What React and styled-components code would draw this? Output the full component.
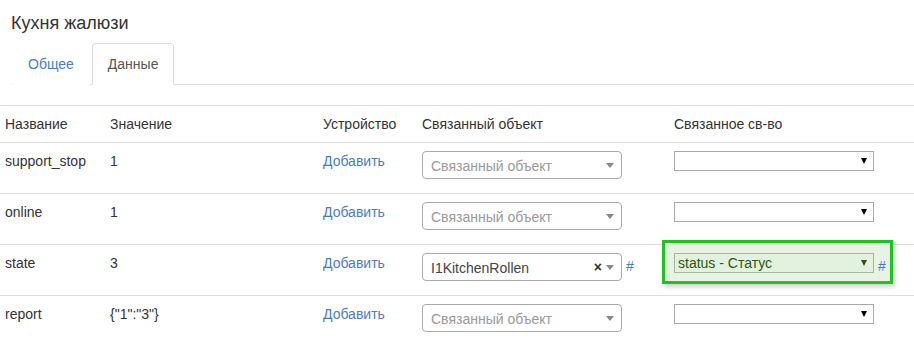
import styled, { createGlobalStyle } from "styled-components";

const GlobalStyle = createGlobalStyle`
  html, body {
    margin: 0;
    padding: 0;
    background: #fff;
  }
  body {
    font-family: "Liberation Sans", Arial, sans-serif;
    font-size: 14px;
    line-height: 20px;
    color: #333;
  }
`;

const rows = [
    { name: "support_stop", value: "1", object: null, prop: null },
    { name: "online", value: "1", object: null, prop: null },
    { name: "state", value: "3", object: "I1KitchenRollen", prop: "status - Статус" },
    { name: "report", value: '{"1":"3"}', object: null, prop: null },
];

const Select2 = ({ value }) => (
    <S.Select2Box>
        <S.Select2Text $placeholder={!value}>{value || "Связанный объект"}</S.Select2Text>
        {value && <S.Clear>×</S.Clear>}
        <S.Select2Arrow />
    </S.Select2Box>
);

const NativeSelect = ({ value, $active }) => (
    <S.NativeBox $active={$active}>
        <S.NativeText $active={$active}>{value}</S.NativeText>
        <S.NativeArrow $active={$active} />
    </S.NativeBox>
);

const App = () => {
    return (
        <>
            <GlobalStyle />
            <S.Page>
                <S.Head>
                    <S.Title>Кухня жалюзи</S.Title>
                    <S.Tabs>
                        <S.Tab>Общее</S.Tab>
                        <S.Tab $active>Данные</S.Tab>
                    </S.Tabs>
                </S.Head>

                <S.Table>
                    <colgroup>
                        <col style={{ width: 105 }} />
                        <col style={{ width: 213 }} />
                        <col style={{ width: 99 }} />
                        <col style={{ width: 252 }} />
                        <col style={{ width: 245 }} />
                    </colgroup>
                    <thead>
                        <tr>
                            <S.Th>Название</S.Th>
                            <S.Th>Значение</S.Th>
                            <S.Th>Устройство</S.Th>
                            <S.Th>Связанный объект</S.Th>
                            <S.Th>Связанное св-во</S.Th>
                        </tr>
                    </thead>
                    <tbody>
                        {rows.map((r) => (
                            <tr key={r.name}>
                                <S.Td>{r.name}</S.Td>
                                <S.Td>{r.value}</S.Td>
                                <S.Td><S.Link>Добавить</S.Link></S.Td>
                                <S.Td>
                                    <S.Inline>
                                        <Select2 value={r.object} />
                                        {r.object && <S.Hash>#</S.Hash>}
                                    </S.Inline>
                                </S.Td>
                                <S.Td $highlight={!!r.prop}>
                                    <S.Inline>
                                        <NativeSelect value={r.prop} $active={!!r.prop} />
                                        {r.prop && <S.Hash>#</S.Hash>}
                                    </S.Inline>
                                </S.Td>
                            </tr>
                        ))}
                    </tbody>
                </S.Table>
            </S.Page>
        </>
    );
};

export default App;

const S = {
    Page: styled.div`
        width: 914px;
    `,

    Head: styled.div`
        padding: 13px 0 0 11px;
    `,

    Title: styled.h4`
        margin: 0 0 10px;
        font-size: 18px;
        font-weight: normal;
        line-height: 20px;
        color: #333;
    `,

    Tabs: styled.ul`
        list-style: none;
        margin: 0;
        padding: 0 0 0 1px;
        display: flex;
        border-bottom: 1px solid #ddd;
    `,

    Tab: styled.li`
        margin: 0 2px -1px 0;
        padding: 10px 15px;
        line-height: 20px;
        border: 1px solid ${(p) => (p.$active ? "#ddd" : "transparent")};
        border-bottom-color: ${(p) => (p.$active ? "#fff" : "transparent")};
        border-radius: 4px 4px 0 0;
        background: #fff;
        color: ${(p) => (p.$active ? "#555" : "#4a7cc2")};
        cursor: pointer;
    `,

    Table: styled.table`
        margin-top: 20px;
        width: 914px;
        table-layout: fixed;
        border-collapse: collapse;
        border-spacing: 0;
    `,

    Th: styled.th`
        text-align: left;
        font-weight: normal;
        padding: 8px 5px;
        border-top: 1px solid #ddd;
        vertical-align: top;
        white-space: nowrap;
    `,

    Td: styled.td`
        position: relative;
        padding: 8px 5px 14px;
        border-top: 1px solid #ddd;
        vertical-align: top;
        white-space: nowrap;

        ${(p) =>
            p.$highlight &&
            `
            &::before {
                content: "";
                position: absolute;
                left: -7px;
                top: -5px;
                width: 231px;
                height: 44px;
                box-sizing: border-box;
                border: 3px solid #1fc31f;
                background: #e7f4e4;
                box-shadow: 2px 3px 4px rgba(0, 0, 0, 0.18);
            }
        `}
    `,

    Link: styled.a`
        color: #4a7cc2;
        cursor: pointer;
    `,

    Inline: styled.div`
        position: relative;
        z-index: 1;
        display: flex;
        align-items: flex-start;
        gap: 4px;
    `,

    Hash: styled.span`
        color: #4a7cc2;
        line-height: 20px;
        margin-top: 3px;
    `,

    Select2Box: styled.div`
        box-sizing: border-box;
        width: 200px;
        height: 28px;
        border: 1px solid #aaa;
        border-radius: 4px;
        background: #fff;
        display: flex;
        align-items: center;
        padding: 0 0 0 8px;
    `,

    Select2Text: styled.span`
        flex: 1;
        color: ${(p) => (p.$placeholder ? "#999" : "#444")};
        line-height: 26px;
        margin-top: 2px;
    `,

    Clear: styled.span`
        font-weight: bold;
        color: #333;
        font-size: 14px;
        margin-right: 4px;
    `,

    Select2Arrow: styled.span`
        width: 0;
        height: 0;
        margin: 0 7px 0 0;
        border-style: solid;
        border-width: 5px 4px 0 4px;
        border-color: #888 transparent transparent transparent;
    `,

    NativeBox: styled.div`
        box-sizing: border-box;
        width: 200px;
        height: 20px;
        border: 1px solid ${(p) => (p.$active ? "#a3b89e" : "#a9a9a9")};
        background: ${(p) => (p.$active ? "#e3f1df" : "#fff")};
        display: flex;
        align-items: center;
        padding: 0 0 0 3px;
    `,

    NativeText: styled.span`
        flex: 1;
        color: ${(p) => (p.$active ? "#285a12" : "#000")};
        font-size: 14px;
        line-height: 18px;
    `,

    NativeArrow: styled.span`
        width: 0;
        height: 0;
        margin-right: 6px;
        border-style: solid;
        border-width: 6px 3.5px 0 3.5px;
        border-color: ${(p) => (p.$active ? "#1d5a10" : "#000")} transparent transparent transparent;
    `,
};
